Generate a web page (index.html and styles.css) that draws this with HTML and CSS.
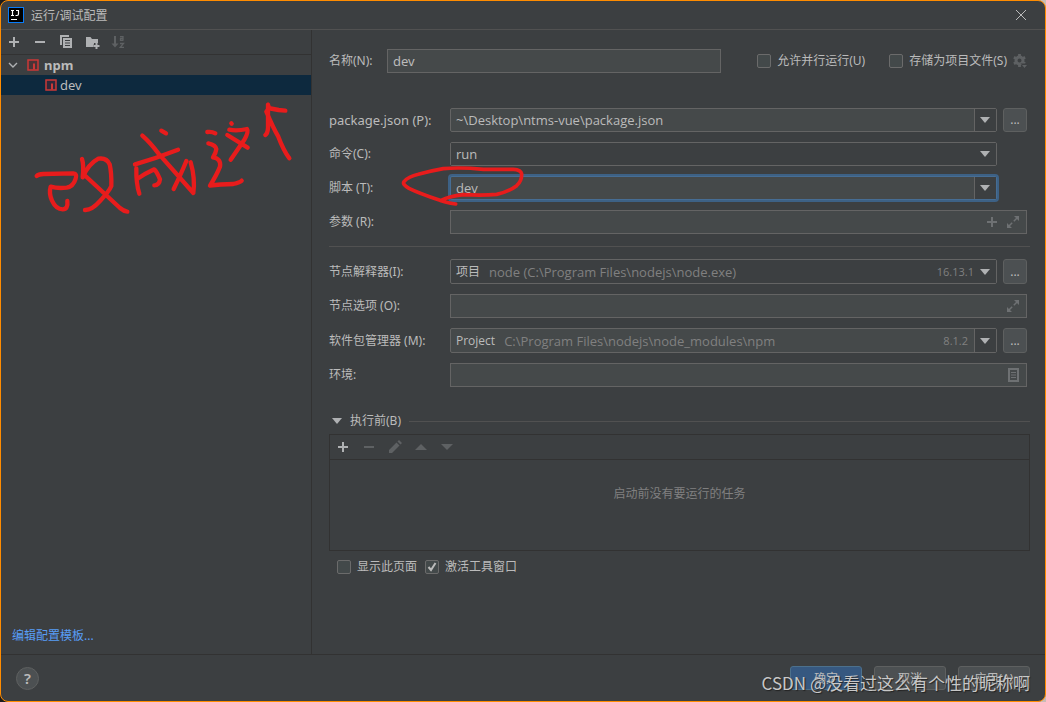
FILE: index.html
```html
<!DOCTYPE html>
<html lang="zh-CN">
<head>
<meta charset="utf-8">
<title>运行/调试配置</title>
<link rel="stylesheet" href="styles.css">
</head>
<body>
<div class="dialog">
  <header class="titlebar">
    <svg class="logo" width="16" height="16" viewBox="0 0 16 16"><rect x=".5" y=".5" width="15" height="15" fill="#000" stroke="#087cfa"/><path d="M3 3.5h3M4.500 3.500v5M3 8.500h3M8 3.500h3M10.500 3.500v3.500q0 1.500-1.500 1.500h-1.500M3 12.500h6" fill="none" stroke="#fff" stroke-width="1.200"/></svg>
    <h1 class="title">运行/调试配置</h1>
    <button class="icon-button" aria-label="关闭"><svg width="16" height="16" viewBox="0 0 16 16"><path d="M3 3l10 10M13 3l-10 10" stroke="#bbb"/></svg></button>
  </header>

  <div class="body">
    <aside class="sidebar">
      <div class="toolbar">
        <button class="icon-button" aria-label="添加"><svg width="16" height="16"><path d="M8 3v10M3 8h10" stroke="#afb1b3" stroke-width="2"/></svg></button>
        <button class="icon-button" aria-label="移除"><svg width="16" height="16"><path d="M3 8h10" stroke="#afb1b3" stroke-width="2"/></svg></button>
        <button class="icon-button" aria-label="复制"><svg width="16" height="16"><path d="M2 1h9v2H4v8H2z" fill="#afb1b3"/><path fill-rule="evenodd" d="M5 4h9v10H5zM7 6v1h5V6zM7 8.500v1h5v-1zM7 11v1h5v-1z" fill="#afb1b3"/></svg></button>
        <button class="icon-button" aria-label="新建文件夹"><svg width="16" height="16"><path d="M2 3h4.500l1.500 2h6v4h-4v4H2z" fill="#afb1b3"/><path d="M12.500 9v6M9.500 12h6" stroke="#3c3f41" stroke-width="3"/><path d="M12.500 9v6M9.500 12h6" stroke="#afb1b3" stroke-width="2"/></svg></button>
        <button class="icon-button" aria-label="排序" disabled><svg width="16" height="16"><path d="M5 2v8" stroke="#5e6163" stroke-width="2"/><path d="M1.500 9.500h7L5 13.500z" fill="#5e6163"/><path d="M10 2.700h3v4M13 4.500h-2.500v1.800h2.500M10 9.500h3.500L10.300 13.300h3.700" fill="none" stroke="#5e6163" stroke-width="1.300"/></svg></button>
      </div>
      <ul class="tree">
        <li class="node group">
          <svg width="12" height="12"><path d="M2 4l4 4 4-4" fill="none" stroke="#afb1b3" stroke-width="1.400"/></svg>
          <svg width="12" height="12"><path d="M1 1h10v10H1z" fill="#4a3436" stroke="#cb3837" stroke-width="1.500"/><path d="M7 4.500v6" stroke="#cb3837" stroke-width="2"/></svg>
          <span>npm</span>
        </li>
        <li class="node leaf">
          <svg width="12" height="12"><path d="M1 1h10v10H1z" fill="#30283a" stroke="#cb3837" stroke-width="1.500"/><path d="M7 4.500v6" stroke="#cb3837" stroke-width="2"/></svg>
          <span>dev</span>
        </li>
      </ul>
      <a class="templates" href="#templates">编辑配置模板...</a>
    </aside>

    <main class="content">
      <div class="name-row">
        <label class="name-label" for="name">名称(N):</label>
        <input class="field name-field" id="name" value="dev">
        <label class="check"><input type="checkbox"> 允许并行运行(U)</label>
        <label class="check store"><input type="checkbox"> 存储为项目文件(S)</label>
        <button class="icon-button" aria-label="存储选项"><svg width="16" height="16"><circle cx="7.500" cy="7.500" r="3.500" fill="none" stroke="#5e6163" stroke-width="3"/><path d="M7.500 1v2.500M7.500 11.500V14M1.900 4.300l2.200 1.200M10.900 9.500l2.200 1.200M1.900 10.700l2.200-1.200M10.900 5.500l2.200-1.200" stroke="#5e6163" stroke-width="2.800"/><path d="M8.500 10.500H16v2L13 15z" fill="#3c3f41"/><path d="M10 12h5l-2.500 3z" fill="#5e6163"/></svg></button>
      </div>

      <div class="form">
        <label class="latin" for="pkg">package.json (P):</label>
        <div class="combo">
          <input class="combo-input" id="pkg" value="~\Desktop\ntms-vue\package.json">
          <button class="combo-arrow" aria-label="展开 package.json"></button>
        </div>
        <button class="browse" aria-label="浏览 package.json">...</button>

        <label for="cmd">命令(C):</label>
        <div class="combo plain">
          <select class="combo-select" id="cmd"><option>run</option></select>
        </div>

        <label class="row-start" for="script">脚本 (T):</label>
        <div class="combo focused">
          <input class="combo-input" id="script" value="dev">
          <button class="combo-arrow" aria-label="展开脚本"></button>
        </div>

        <label class="row-start" for="args">参数 (R):</label>
        <div class="field wide">
          <input class="bare" id="args">
          <button class="icon-button" aria-label="插入宏"><svg width="16" height="16"><path d="M8 3v10M3 8h10" stroke="#6e7173" stroke-width="2"/></svg></button>
          <button class="icon-button" aria-label="展开参数"><svg width="16" height="16"><path d="M9 2h5v5zM2 9v5h5z" fill="#6e7173"/><path d="M8.800 7.200L12 4M7.200 8.800L4 12" stroke="#6e7173" stroke-width="1.500"/></svg></button>
        </div>
      </div>

      <hr class="separator">

      <div class="form">
        <label for="node">节点解释器(I):</label>
        <button class="combo plain tall" id="node">
          <span class="main-text">项目</span><span class="detail">node (C:\Program Files\nodejs\node.exe)</span><span class="version">16.13.1</span><span class="combo-arrow"></span>
        </button>
        <button class="browse tall" aria-label="浏览节点解释器">...</button>

        <label for="options">节点选项 (O):</label>
        <div class="field wide">
          <input class="bare" id="options">
          <button class="icon-button" aria-label="展开选项"><svg width="16" height="16"><path d="M9 2h5v5zM2 9v5h5z" fill="#6e7173"/><path d="M8.800 7.200L12 4M7.200 8.800L4 12" stroke="#6e7173" stroke-width="1.500"/></svg></button>
        </div>

        <label for="manager">软件包管理器 (M):</label>
        <button class="combo tall" id="manager">
          <span class="main-text">Project</span><span class="detail">C:\Program Files\nodejs\node_modules\npm</span><span class="version">8.1.2</span><span class="combo-arrow"></span>
        </button>
        <button class="browse tall" aria-label="浏览软件包管理器">...</button>

        <label for="env">环境:</label>
        <div class="field wide">
          <input class="bare" id="env">
          <button class="icon-button" aria-label="编辑环境变量"><svg width="16" height="16"><path d="M4 2h9v12H4z" fill="none" stroke="#6e7173" stroke-width="2"/><path d="M6 5.500h5M6 8h5M6 10.500h5" stroke="#6e7173"/></svg></button>
        </div>
      </div>

      <section class="before">
        <h2 class="before-title"><svg width="10" height="6"><path d="M0 0h10L5 6z" fill="#afb1b3"/></svg><span>执行前(B)</span></h2>
        <div class="tasks">
          <div class="toolbar">
            <button class="icon-button" aria-label="添加任务"><svg width="16" height="16"><path d="M8 3v10M3 8h10" stroke="#afb1b3" stroke-width="2"/></svg></button>
            <button class="icon-button" aria-label="移除任务" disabled><svg width="16" height="16"><path d="M3 8h10" stroke="#5e6163" stroke-width="2"/></svg></button>
            <button class="icon-button" aria-label="编辑任务" disabled><svg width="16" height="16"><path d="M2 11l7.500-7.500 3 3L5 14H2zM10.500 2.500L12 1l3 3-1.500 1.500z" fill="#5e6163"/></svg></button>
            <button class="icon-button" aria-label="上移" disabled><svg width="16" height="16"><path d="M2 11h12L8 5z" fill="#5e6163"/></svg></button>
            <button class="icon-button" aria-label="下移" disabled><svg width="16" height="16"><path d="M2 5h12l-6 6z" fill="#5e6163"/></svg></button>
          </div>
          <p class="empty">启动前没有要运行的任务</p>
        </div>
        <div class="checks">
          <label class="check"><input type="checkbox"> 显示此页面</label>
          <label class="check"><input type="checkbox" checked> 激活工具窗口</label>
        </div>
      </section>
    </main>
  </div>

  <footer class="footer">
    <button class="help" aria-label="帮助">?</button>
    <button class="action primary">确定</button>
    <button class="action">取消</button>
    <button class="action">应用(A)</button>
  </footer>

  <svg class="ink ink-note" viewBox="0 0 900 390" aria-hidden="true">
    <path d="M50 258Q55 253 70 252L160 250Q172 251 167 266Q160 290 140 293Q112 296 92 290Q86 310 96 332Q108 358 128 358Q145 357 142 333"/>
    <path d="M186 207Q192 225 188 262Q205 222 235 206Q260 202 269 223Q275 250 274 288Q268 303 240 333Q215 361 195 360M190 252L300 354Q312 364 322 365"/>
    <path d="M367 137Q390 157 415 190L520 309Q526 265 512 217M424 122L438 130M345 223Q410 204 474 179M349 235Q348 280 358 311M356 264Q375 251 403 238Q410 244 420 268Q418 286 403 286M499 213Q484 250 461 297"/>
    <path d="M562 126Q575 124 586 130M565 160Q587 165 589 177Q588 188 579 202Q604 206 600 230Q590 255 570 287Q600 282 640 282Q660 277 665 272M634 100L635 101M628 119Q650 124 681 117Q687 125 672 151L632 209M622 135L683 173"/>
    <path d="M744 44L744 114Q743 130 736 135M739 65Q750 55 744 44M744 54L776 60L796 62M739 65Q760 115 775 140Q790 180 808 205"/>
  </svg>
  <svg class="ink ink-circle" viewBox="0 0 450 165" aria-hidden="true">
    <path d="M197 132Q165 127 150 121Q85 99 57 85Q36 73 42 65Q55 50 85 43Q125 32 160 26Q210 21 280 28L370 28Q393 29 395 42Q396 63 380 77Q355 96 320 103Q280 107 220 104Q175 109 152 122"/>
  </svg>
  <div class="watermark">CSDN @没看过这么有个性的昵称啊</div>
</div>
</body>
</html>
```

FILE: styles.css
```css
* { box-sizing: border-box; }

body {
  margin: 0;
  background: linear-gradient(90deg, #1b1b1b, #c9bdb5);
  color: #bbbbbb;
  font: 12px/16px "Noto Sans", "Noto Sans CJK SC", sans-serif;
}

button, input, select { font: inherit; color: inherit; }
button { padding: 0; cursor: pointer; }
svg { display: block; flex: none; }

.dialog {
  position: relative;
  display: flex;
  flex-direction: column;
  min-height: 100vh;
  border: 1px solid #ff8c00;
  border-radius: 8px;
  background: #3c3f41;
  overflow: hidden;
}

.titlebar {
  display: flex;
  align-items: center;
  gap: 7px;
  height: 29px;
  padding: 0 16px 0 7px;
  border-bottom: 1px solid #515151;
}
.title { flex: 1; margin: 0; font-size: 12px; font-weight: 400; line-height: 18px; padding-top: 2px; }
.icon-button { flex: none; border: 0; background: none; }

.body { flex: 1; display: flex; }

.sidebar {
  display: flex;
  flex-direction: column;
  flex: none;
  width: 311px;
  border-right: 1px solid #323232;
}
.toolbar {
  display: flex;
  align-items: center;
  gap: 10px;
  height: 25px;
  padding: 0 5px;
  border-bottom: 1px solid #323232;
}
.tree { flex: 1; margin: 0; padding: 0; list-style: none; font-size: 13px; }
.node { display: flex; align-items: center; height: 20px; }
.group { gap: 8px; padding-left: 6px; font-weight: 700; }
.group span { margin-left: -3px; }
.leaf { gap: 3px; padding-left: 44px; background: #0d293e; }
.templates { padding: 0 11px 10px; color: #589df6; text-decoration: none; }

.content { flex: 1; min-width: 0; padding: 19px 15px 0 17px; }

.field {
  height: 24px;
  border: 1px solid #646464;
  background: #45494a;
}
.name-row { display: flex; align-items: center; margin-bottom: 35px; padding-right: 2px; }
.name-label { flex: none; width: 58px; }
.name-field { flex: 1; min-width: 0; margin-right: 36px; padding: 0 5px; font-size: 13px; }
.store { margin: 0 5px 0 24px; }

.check { display: flex; align-items: center; gap: 6px; white-space: nowrap; }
.check input {
  appearance: none;
  width: 14px;
  height: 14px;
  margin: 0;
  border: 1px solid #6b6b6b;
  border-radius: 2px;
  background: #43494a;
}
.check input:checked {
  background-image: url("data:image/svg+xml,%3Csvg xmlns='http://www.w3.org/2000/svg' viewBox='0 0 12 12'%3E%3Cpath d='M2.500 6l2.500 3 4.500-7' fill='none' stroke='%23bbb' stroke-width='2'/%3E%3C/svg%3E");
}

.form {
  display: grid;
  grid-template-columns: 115px 1fr 24px;
  align-items: center;
  gap: 10px 6px;
  padding-right: 3px;
}
.form label { white-space: nowrap; }
.form .latin { font-size: 13px; }
.row-start { grid-column: 1; }
.wide { grid-column: 2 / 4; display: flex; align-items: center; gap: 5px; padding-right: 5px; }
.bare { flex: 1; min-width: 0; border: 0; outline: 0; background: none; }

.combo {
  display: flex;
  align-items: center;
  height: 24px;
  padding: 0;
  border: 1px solid #646464;
  border-radius: 2px;
  background: #45494a;
  text-align: left;
  font-family: "Open Sans", "Noto Sans CJK SC", sans-serif;
  font-size: 13px;
}
.tall { height: 25px; }
.plain { background: #3c3f41; }
.focused { border-color: #466d94; box-shadow: 0 0 0 2px #3d6185; }
.combo-input {
  flex: 1;
  min-width: 0;
  height: 100%;
  padding: 0 5px;
  border: 0;
  outline: 0;
  background: none;
}
.combo-arrow, .combo-select {
  background: #3c3f41 url("data:image/svg+xml,%3Csvg xmlns='http://www.w3.org/2000/svg' width='10' height='6'%3E%3Cpath d='M0 0h10L5 6z' fill='%23afb1b3'/%3E%3C/svg%3E") no-repeat right 6px center;
}
.combo-arrow {
  width: 22px;
  height: 100%;
  border: 0;
  border-left: 1px solid #646464;
}
.plain .combo-arrow { border-left-color: transparent; }
.combo-select { appearance: none; width: 100%; height: 100%; padding: 0 5px; border: 0; }
.main-text { padding: 0 9px 0 5px; font-size: 12px; }
.detail { flex: 1; color: #808080; }
.version { padding-right: 6px; color: #808080; font-size: 11px; }
.plain .version { padding-right: 0; }

.browse {
  height: 24px;
  border: 1px solid #5e6060;
  border-radius: 3px;
  background: #4c5052;
}
.browse.tall { height: 25px; }

.separator { margin: 12px 0; border: 0; border-top: 1px solid #515151; }

.before { margin-top: 26px; }
.before-title {
  display: flex;
  align-items: center;
  gap: 8px;
  margin: 0 0 5px;
  padding-left: 3px;
  font-size: 12px;
  font-weight: 400;
}
.before-title::after { content: ""; flex: 1; height: 1px; background: #515151; }
.tasks { height: 117px; border: 1px solid #323232; }
.empty { margin: 26px 0 0; color: #808080; text-align: center; }
.checks { display: flex; gap: 8px; padding: 8px; }

.footer {
  display: flex;
  align-items: center;
  gap: 12px;
  height: 47px;
  padding: 0 15px;
  border-top: 1px solid #323232;
}
.help {
  width: 23px;
  height: 23px;
  margin-right: auto;
  border: 1px solid #5e6060;
  border-radius: 50%;
  background: #4c5052;
  font-size: 15px;
  font-weight: 600;
}
.action {
  width: 72px;
  height: 24px;
  padding-top: 2px;
  border: 1px solid #5e6060;
  border-radius: 3px;
  background: #4c5052;
}
.primary { border-color: #4c708c; background: #365880; }

.ink {
  position: absolute;
  fill: none;
  stroke: #e81c1c;
  stroke-width: 13;
  stroke-linecap: round;
  stroke-linejoin: round;
  pointer-events: none;
}
.ink-note { left: 19px; top: 89px; width: 300px; height: 130px; }
.ink-circle { left: 389px; top: 159px; width: 150px; height: 55px; stroke-width: 11; }

.watermark {
  position: absolute;
  right: 15px;
  bottom: 6px;
  color: #c8c8c8;
  font: 17px/24px "Noto Sans CJK SC", sans-serif;
  text-shadow: 1px 1px 1px #222222;
  white-space: nowrap;
  pointer-events: none;
}
```
